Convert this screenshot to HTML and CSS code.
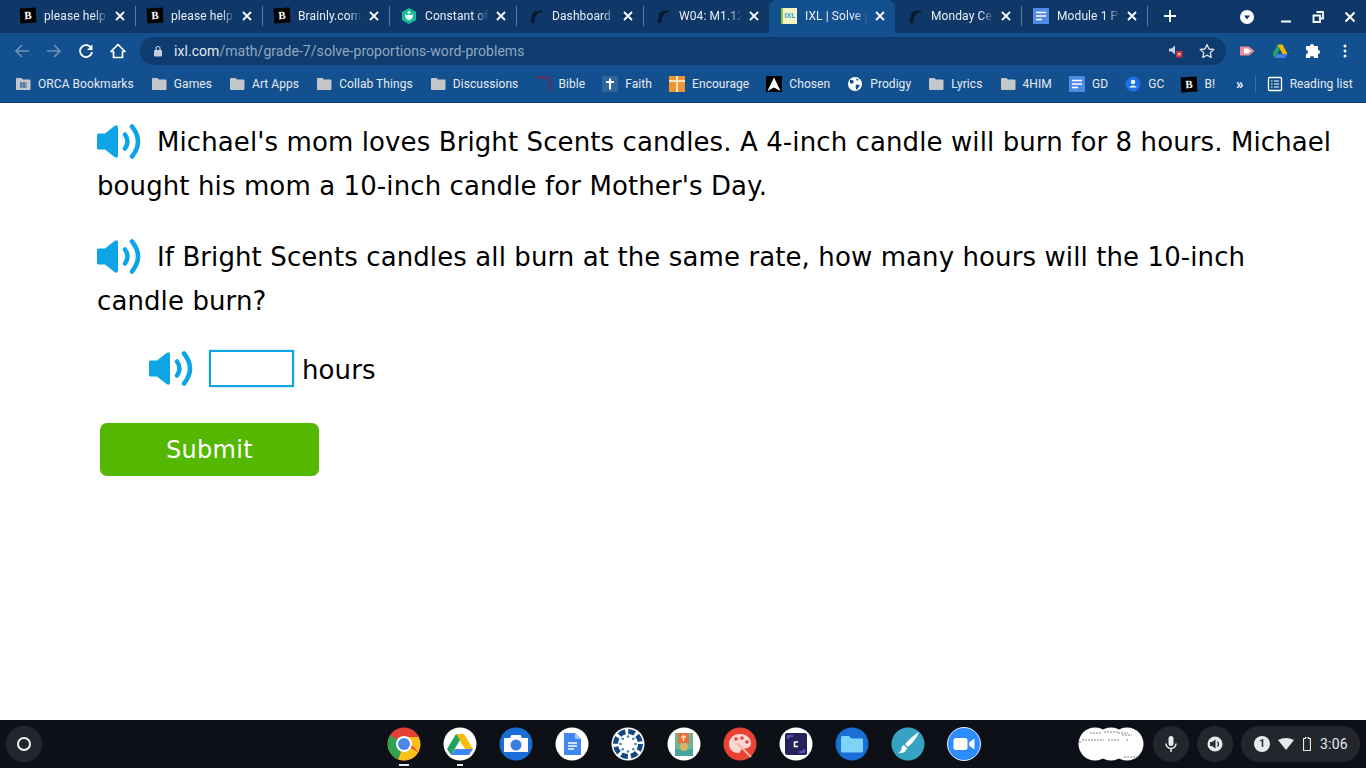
FILE: index.html
```html
<!DOCTYPE html>
<html lang="en">
<head>
<meta charset="utf-8">
<title>IXL | Solve proportions word problems</title>
<link rel="stylesheet" href="styles.css">
</head>
<body>
<svg class="defs" width="0" height="0" aria-hidden="true">
  <symbol id="close" viewBox="0 0 10 10"><path d="M1 1l8 8M9 1l-8 8" fill="none" stroke="currentColor" stroke-width="1.8"/></symbol>
  <symbol id="folder" viewBox="0 0 16 16"><path d="M1 3Q1 2 2 2H6.500L8 3.500H14.500Q15.500 3.500 15.500 4.500V13Q15.500 14 14.500 14H2Q1 14 1 13Z" fill="#c4c7c9"/></symbol>
  <symbol id="canvas" viewBox="0 0 16 16"><path d="M3 15Q3 8 5 4.500Q7 2 15 2.500L13 4.500Q9.500 4.500 8.500 7.500Q6.500 9 6 15Z" fill="#0a1a2e"/></symbol>
  <symbol id="doc" viewBox="0 0 16 16"><rect width="16" height="16" rx="1" fill="#4f8ae6"/><path d="M3 4.500h10M3 8h10M3 11.500h6" stroke="#fff" stroke-width="1.500"/></symbol>
  <symbol id="speaker" viewBox="0 0 44 35"><path d="M1.500 9.500H8L17.500 2Q21 0 21 3.500V31.500Q21 35 17.500 33L8 25.500H1.500Q0 25.500 0 24V11Q0 9.500 1.500 9.500Z" fill="#0ea5e6"/><path d="M28 10.500Q33 17.500 28 24.500M35 2.500Q47 17.500 35 32.500" fill="none" stroke="#0ea5e6" stroke-width="4.500" stroke-linecap="round"/></symbol>
</svg>
<div class="screen">
  <header class="tabstrip">
    <div class="tab tab-wide"><span class="fav-b">B</span><span class="tab-title">please help</span><svg class="tab-x"><use href="#close"/></svg></div>
    <div class="tab tab-wide"><span class="fav-b">B</span><span class="tab-title">please help</span><svg class="tab-x"><use href="#close"/></svg></div>
    <div class="tab tab-wide"><span class="fav-b">B</span><span class="tab-title">Brainly.com</span><svg class="tab-x"><use href="#close"/></svg></div>
    <div class="tab tab-wide"><svg class="fav" viewBox="0 0 16 16"><path d="M8 0L15 4V12L8 16L1 12V4Z" fill="#14bf96"/><path d="M4 6.500Q8 7.500 12 6.500Q12 11 8 12.500Q4 11 4 6.500Z" fill="#fff"/><circle cx="8" cy="4.500" r="1.500" fill="#fff"/></svg><span class="tab-title">Constant of</span><svg class="tab-x"><use href="#close"/></svg></div>
    <div class="tab tab-wide"><svg class="fav"><use href="#canvas"/></svg><span class="tab-title">Dashboard</span><svg class="tab-x"><use href="#close"/></svg></div>
    <div class="tab tab-before-active"><svg class="fav"><use href="#canvas"/></svg><span class="tab-title">W04: M1.12</span><svg class="tab-x"><use href="#close"/></svg></div>
    <div class="tab active"><span class="fav-ixl">IXL</span><span class="tab-title">IXL | Solve p</span><svg class="tab-x"><use href="#close"/></svg></div>
    <div class="tab"><svg class="fav"><use href="#canvas"/></svg><span class="tab-title">Monday Ce</span><svg class="tab-x"><use href="#close"/></svg></div>
    <div class="tab"><svg class="fav"><use href="#doc"/></svg><span class="tab-title">Module 1 P</span><svg class="tab-x"><use href="#close"/></svg></div>
    <svg class="newtab" viewBox="0 0 12 12"><path d="M6 0v12M0 6h12" stroke="#fff" stroke-width="1.800"/></svg>
    <div class="winctl">
      <span class="tabsearch"><svg viewBox="0 0 14 14"><circle cx="7" cy="7" r="7" fill="#fff"/><path d="M4 5.500h6L7 9.500Z" fill="#123a6b"/></svg></span>
      <svg class="wc" viewBox="0 0 12 12"><path d="M1 10.500h10" stroke="#fff" stroke-width="2"/></svg>
      <svg class="wc" viewBox="0 0 12 12"><path d="M4.500 1h6.500v6.500H9M1.500 4.500H8V11H1.500Z" fill="none" stroke="#fff" stroke-width="1.800"/></svg>
      <svg class="wc wc-last" viewBox="0 0 12 12"><path d="M1.500 1.500l9 9M10.500 1.500l-9 9" stroke="#fff" stroke-width="2"/></svg>
    </div>
  </header>

  <nav class="toolbar">
    <svg class="tb tb-dim" viewBox="0 0 16 16"><path d="M15 8H2M8 2L2 8l6 6" fill="none" stroke="currentColor" stroke-width="1.600"/></svg>
    <svg class="tb tb-dim" viewBox="0 0 16 16"><path d="M1 8h13M8 2l6 6-6 6" fill="none" stroke="currentColor" stroke-width="1.600"/></svg>
    <svg class="tb" viewBox="0 0 16 16"><path d="M13.500 5.500A6 6 0 1 0 14 9" fill="none" stroke="#fff" stroke-width="1.800"/><path d="M14.500 1.500V7H9Z" fill="#fff"/></svg>
    <svg class="tb" viewBox="0 0 16 16"><path d="M8 1.500L1 8.500H3.500V14.500H12.500V8.500H15Z" fill="none" stroke="#fff" stroke-width="1.700" stroke-linejoin="round"/></svg>
    <div class="omnibox">
      <svg class="lock" viewBox="0 0 10 12"><path d="M3 5V3.500a2 2 0 0 1 4 0V5" fill="none" stroke="#c5cfdb" stroke-width="1.200"/><rect x="1" y="5" width="8" height="6.500" rx="1" fill="#c5cfdb"/></svg>
      <span class="url"><span class="url-host">ixl.com</span>/math/grade-7/solve-proportions-word-problems</span>
      <svg class="muted" viewBox="0 0 14 14"><path d="M0 4.500H2.500L6 1.500V10.500L2.500 7.500H0Z" fill="#c9d3dd"/><rect x="7" y="7" width="6.500" height="6.500" fill="#c8333f"/><path d="M9 9l2.500 2.500M11.500 9L9 11.500" stroke="#fff"/></svg>
      <svg class="star" viewBox="0 0 16 16"><path d="M8 1.500l2 4.500 4.800.5-3.600 3.200 1 4.800L8 12.100 3.800 14.500l1-4.800L1.200 6.500 6 6Z" fill="none" stroke="#d7dee6" stroke-width="1.300" stroke-linejoin="round"/></svg>
    </div>
    <div class="extensions">
      <svg class="ext" viewBox="0 0 16 16"><path d="M1 3.500H10L15.500 8L10 12.500H1Z" fill="#f08a92"/><path d="M5 5.500H9L12 8L9 10.500H5Z" fill="#fff"/></svg>
      <svg class="ext" viewBox="0 0 16 16"><path d="M5.500 1.500h5L15.500 11H10.500Z" fill="#f5b800"/><path d="M5.500 1.500L.5 11l2.500 4 5-9Z" fill="#21a464"/><path d="M3 15h10l2.500-4H5.500Z" fill="#3f7fe8"/></svg>
      <svg class="ext" viewBox="0 0 16 16"><path d="M6 3a2 2 0 0 1 4 0h4v4a2 2 0 0 1 0 4v4H10a2 2 0 0 0-4 0H2v-4a2 2 0 0 0 0-4V3Z" fill="#fff"/></svg>
      <svg class="ext" viewBox="0 0 16 16"><circle cx="8" cy="3" r="1.500" fill="#fff"/><circle cx="8" cy="8" r="1.500" fill="#fff"/><circle cx="8" cy="13" r="1.500" fill="#fff"/></svg>
    </div>
  </nav>

  <nav class="bookmarks">
    <span class="bm"><svg class="bm-i" viewBox="0 0 16 16"><path d="M1 3Q1 2 2 2H6.500L8 3.500H14.500Q15.500 3.500 15.500 4.500V13Q15.500 14 14.500 14H2Q1 14 1 13Z" fill="#c4c7c9"/><path d="M5 7h7M5 9h7M5 11h7M6 6.500v5M9 6.500v5" stroke="#13508f" stroke-width=".8"/></svg>ORCA Bookmarks</span>
    <span class="bm"><svg class="bm-i"><use href="#folder"/></svg>Games</span>
    <span class="bm"><svg class="bm-i"><use href="#folder"/></svg>Art Apps</span>
    <span class="bm"><svg class="bm-i"><use href="#folder"/></svg>Collab Things</span>
    <span class="bm"><svg class="bm-i"><use href="#folder"/></svg>Discussions</span>
    <span class="bm"><svg class="bm-i" viewBox="0 0 16 16"><path d="M1 1.500H11Q15 1.500 15 6V15" fill="none" stroke="#6b2a4e" stroke-width="1.800"/></svg>Bible</span>
    <span class="bm"><svg class="bm-i" viewBox="0 0 16 16"><rect width="16" height="16" fill="#2f6699"/><path d="M8 2.500v11M4 6h8" stroke="#fff" stroke-width="2"/></svg>Faith</span>
    <span class="bm"><svg class="bm-i" viewBox="0 0 16 16"><rect width="16" height="16" fill="#f09536"/><path d="M8 0v16M0 5h16" stroke="#fbe3c5" stroke-width="2"/></svg>Encourage</span>
    <span class="bm"><svg class="bm-i" viewBox="0 0 16 16"><rect width="16" height="16" fill="#000"/><path d="M8 1.500L14.500 15L8 11.500L1.500 15Z" fill="#fff"/></svg>Chosen</span>
    <span class="bm"><svg class="bm-i" viewBox="0 0 16 16"><circle cx="8" cy="8" r="7" fill="#fff"/><path d="M3 4Q6 3 7 6Q5 9 3 7ZM9 8.500L13 9L10 14Q8 12 9 8.500ZM9 2.500L12 3.500L10 5Z" fill="#13508f"/></svg>Prodigy</span>
    <span class="bm"><svg class="bm-i"><use href="#folder"/></svg>Lyrics</span>
    <span class="bm"><svg class="bm-i"><use href="#folder"/></svg>4HIM</span>
    <span class="bm"><svg class="bm-i"><use href="#doc"/></svg>GD</span>
    <span class="bm"><svg class="bm-i" viewBox="0 0 16 16"><circle cx="8" cy="8" r="7.500" fill="#1a73e8"/><circle cx="8" cy="6" r="2.200" fill="#fff"/><path d="M4 11.500Q8 7.500 12 11.500Z" fill="#fff"/></svg>GC</span>
    <span class="bm bm-last"><span class="fav-b">B</span>B!</span>
    <span class="chev">»</span>
    <span class="reading"><svg class="bm-i" viewBox="0 0 16 16"><rect x="1.500" y="1.500" width="13" height="13" rx="1" fill="none" stroke="#fff" stroke-width="1.300"/><path d="M4 5h1.500M7 5h5M4 8h1.500M7 8h5M4 11h1.500M7 11h5" stroke="#fff" stroke-width="1.200"/></svg>Reading list</span>
  </nav>

  <main class="page">
    <p class="question"><svg class="audio"><use href="#speaker"/></svg>Michael's mom loves Bright Scents candles. A 4-inch candle will burn for 8 hours. Michael bought his mom a 10-inch candle for Mother's Day.</p>
    <p class="question"><svg class="audio"><use href="#speaker"/></svg>If Bright Scents candles all burn at the same rate, how many hours will the 10-inch candle burn?</p>
    <div class="answer">
      <svg class="audio"><use href="#speaker"/></svg>
      <input class="answer-input" type="text" aria-label="hours">
      <span class="unit">hours</span>
    </div>
    <button class="submit" type="button">Submit</button>
  </main>

  <footer class="shelf">
    <button class="launcher" type="button" aria-label="Launcher"><span class="launcher-ring"></span></button>
    <div class="apps">
      <span class="app running"><svg viewBox="0 0 34 34"><circle cx="17" cy="17" r="16.500" fill="#e53f35"/><path d="M17 17L31.300 25.200A16.500 16.500 0 0 1 11 32.400Z" fill="#f9c21a"/><path d="M17 17L11 32.400A16.500 16.500 0 0 1 3.300 8Z" fill="#2fa44f"/><path d="M17 10H31.500A16.500 16.500 0 0 1 31.300 25.200Z" fill="#f9c21a"/><circle cx="17" cy="17" r="8" fill="#fff"/><circle cx="17" cy="17" r="6" fill="#4b86e8"/></svg></span>
      <span class="app running short"><svg viewBox="0 0 34 34"><circle cx="17" cy="17" r="16.500" fill="#fff"/><path d="M13 7h8l9 15h-8Z" fill="#fbbc04"/><path d="M13 7L4 22l4 6 9-15Z" fill="#1ea362"/><path d="M8 28H26L30 22H12Z" fill="#4285f4"/></svg></span>
      <span class="app"><svg viewBox="0 0 34 34"><circle cx="17" cy="17" r="16.500" fill="#1a6fd6"/><path d="M5 11H11L12.500 8H21.500L23 11H29V25H5Z" fill="#fff"/><circle cx="17" cy="18" r="5.500" fill="#3b7de0"/></svg></span>
      <span class="app"><svg viewBox="0 0 34 34"><circle cx="17" cy="17" r="16.500" fill="#fff"/><path d="M9 6H20L26 12V28H9Z" fill="#4285f4"/><path d="M20 6L26 12H20Z" fill="#a5c4f8"/><path d="M13 16h9M13 19h9M13 22h6" stroke="#fff" stroke-width="1.400"/></svg></span>
      <span class="app"><svg viewBox="0 0 34 34"><circle cx="17" cy="17" r="16.500" fill="#fff"/><circle cx="17" cy="17" r="12.500" fill="none" stroke="#12487e" stroke-width="5" stroke-dasharray="6.800 3"/><g fill="#3f8f9f"><circle cx="17" cy="9.500" r="1.300"/><circle cx="17" cy="24.500" r="1.300"/><circle cx="9.500" cy="17" r="1.300"/><circle cx="24.500" cy="17" r="1.300"/><circle cx="11.700" cy="11.700" r="1.300"/><circle cx="22.300" cy="11.700" r="1.300"/><circle cx="11.700" cy="22.300" r="1.300"/><circle cx="22.300" cy="22.300" r="1.300"/></g></svg></span>
      <span class="app"><svg viewBox="0 0 34 34"><circle cx="17" cy="17" r="16.500" fill="#fff"/><rect x="8" y="6" width="18" height="23" fill="#6fb58f"/><rect x="11" y="6" width="11" height="10" fill="#e8703f"/><path d="M16.500 8v6M14 10h5" stroke="#fbe3c5" stroke-width="1.500"/><rect x="8" y="22" width="18" height="7" fill="#47a7a0"/><circle cx="17" cy="20" r="4" fill="#d9b25f"/></svg></span>
      <span class="app"><svg viewBox="0 0 34 34"><circle cx="17" cy="17" r="16.500" fill="#ea4335"/><path d="M17 7C10 7 6 12 6 17C6 23 11 26 15 26C18 26 17 23 19 22C22 21 28 22 28 16C28 11 23 7 17 7Z" fill="#fbd7d4"/><path d="M14 16L28 30" stroke="#f4b5af" stroke-width="2"/><circle cx="13" cy="12" r="1.800" fill="#ea4335"/><circle cx="19" cy="11" r="1.800" fill="#ea4335"/><circle cx="24" cy="15" r="1.800" fill="#ea4335"/></svg></span>
      <span class="app"><svg viewBox="0 0 34 34"><circle cx="17" cy="17" r="16.500" fill="#fff"/><rect x="6" y="6" width="22" height="22" rx="2" fill="#24235c"/><path d="M9 12V9H14M25 22V25H20" fill="none" stroke="#6d62d8" stroke-width="1.400"/><path d="M19 15H15.500V19.500H19" fill="none" stroke="#fff" stroke-width="1.500"/></svg></span>
      <span class="app"><svg viewBox="0 0 34 34"><circle cx="17" cy="17" r="16.500" fill="#1a6fd6"/><path d="M6 10.500Q6 9 7.500 9H14L16.500 11.500H27Q28 11.500 28 12.500V24Q28 25.500 26.500 25.500H7.500Q6 25.500 6 24Z" fill="#7fd3f7"/></svg></span>
      <span class="app"><svg viewBox="0 0 34 34"><circle cx="17" cy="17" r="16.500" fill="#37a3c4"/><path d="M28 5Q25 13 17 20L14 17Q21 9 28 5Z" fill="#fff"/><path d="M13 18L16 21Q15 27 7 26Q11 24 10.500 21Q11 18.500 13 18Z" fill="#fff"/></svg></span>
      <span class="app"><svg viewBox="0 0 34 34"><circle cx="17" cy="17" r="16.500" fill="#2d8cff" stroke="#dfeeff"/><rect x="6.500" y="11" width="14" height="12" rx="2.500" fill="#fff"/><path d="M22 15.500L27.500 11.500V22.500L22 18.500Z" fill="#fff"/></svg></span>
    </div>
    <div class="tray">
      <svg class="holding" viewBox="0 0 66 34"><g fill="#fff"><circle cx="17" cy="17" r="16.500"/><circle cx="33" cy="17" r="16.500"/><circle cx="49" cy="17" r="16.500"/></g><path d="M12 6h12M26 5h14M40 6h10M44 8h10M4 13h22M30 13h12M48 13h2M1 15h3M46 30h14" stroke="#7c8794" stroke-width="1" stroke-dasharray="2 1"/></svg>
      <span class="tray-btn"><svg viewBox="0 0 16 18"><rect x="5.500" y="1" width="5" height="10" rx="2.500" fill="#e8eaed"/><path d="M3 8.500a5 5 0 0 0 10 0M8 13.500V17" fill="none" stroke="#e8eaed" stroke-width="1.500"/></svg></span>
      <span class="tray-btn tray-audio"><svg viewBox="0 0 16 16"><circle cx="8" cy="8" r="7.500" fill="#e8eaed"/><path d="M3 6H5L8.500 3.500V12.500L5 10H3Z" fill="#2a2e33"/><path d="M10.500 5.500a4 4 0 0 1 0 5" fill="none" stroke="#2a2e33" stroke-width="1.200"/></svg></span>
      <div class="status">
        <span class="badge">1</span>
        <svg class="wifi" viewBox="0 0 16 12"><path d="M0 2Q8-2 16 2L8 12Z" fill="#e8eaed"/></svg>
        <svg class="battery" viewBox="0 0 8 14"><path d="M2.500 0H5.500V1.500H7.500V13.500H.5V1.500H2.500Z" fill="none" stroke="#e8eaed" stroke-width="1.200"/></svg>
        <span class="clock">3:06</span>
      </div>
    </div>
  </footer>
</div>
</body>
</html>
```

FILE: styles.css
```css
* { box-sizing: border-box; }
html, body { margin: 0; padding: 0; height: 100%; overflow: hidden; background: #fff; }
.defs { position: absolute; }
.screen { width: 1366px; height: 768px; display: flex; flex-direction: column; font-family: Roboto, "Liberation Sans", sans-serif; }

/* tab strip */
.tabstrip { height: 33px; flex: none; display: flex; align-items: stretch; padding-left: 8px; background: #0f3868; color: #e8eef5; }
.tab { width: 126px; flex: none; display: flex; align-items: center; padding: 0 10px 2px 12px; position: relative; font-size: 12px; }
.tab-wide { width: 127px; }
.tab::after { content: ""; position: absolute; right: -1px; top: 6px; bottom: 7px; width: 1px; background: #5d7c9e; }
.tab-before-active::after, .tab.active::after { display: none; }
.tab.active { background: #13508f; border-radius: 8px 8px 0 0; }
.fav { width: 16px; height: 16px; flex: none; }
.fav-b { width: 16px; height: 15px; flex: none; background: #000; color: #fff; font: bold 11px/15px "Liberation Serif", serif; text-align: center; transform: rotate(-3deg); }
.fav-ixl { width: 16px; height: 16px; flex: none; background: #f4f4c8; border-left: 2px solid #8cc63f; color: #2a9fd6; font: bold 7px/16px "Liberation Sans", sans-serif; text-align: center; overflow: hidden; }
.tab-title { flex: 1; margin-left: 8px; white-space: nowrap; overflow: hidden; letter-spacing: .1px; -webkit-mask-image: linear-gradient(90deg, #000 78%, transparent 98%); mask-image: linear-gradient(90deg, #000 78%, transparent 98%); }
.tab-x { width: 10px; height: 10px; flex: none; margin-left: 6px; color: #fff; }
.newtab { width: 12px; height: 12px; flex: none; align-self: center; margin: 0 0 2px 17px; }
.winctl { margin-left: auto; display: flex; align-items: center; }
.tabsearch { display: flex; margin-right: 26px; }
.tabsearch svg { width: 14px; height: 14px; }
.wc { width: 12px; height: 12px; margin-right: 20px; }
.wc-last { margin-right: 10px; }

/* toolbar */
.toolbar { height: 34px; flex: none; display: flex; align-items: center; background: #13508f; padding: 2px 0 0 14px; }
.tb { width: 16px; height: 16px; margin-right: 16px; flex: none; color: #fff; }
.tb-dim { color: #6c93bb; }
.omnibox { width: 1086px; height: 28px; margin-left: -2px; flex: none; background: #0f3c6f; border-radius: 14px; display: flex; align-items: center; padding: 0 11px 0 13px; font-size: 14px; color: #8fa8c2; }
.lock { width: 10px; height: 12px; flex: none; }
.url { margin-left: 11px; flex: 1; white-space: nowrap; letter-spacing: .05px; }
.url-host { color: #e3e9ef; }
.muted { width: 14px; height: 14px; margin-right: 16px; }
.star { width: 16px; height: 16px; }
.extensions { display: flex; align-items: center; gap: 16.500px; margin-left: 13px; }
.ext { width: 16px; height: 16px; flex: none; }

/* bookmarks */
.bookmarks { height: 36px; flex: none; display: flex; align-items: center; background: #13508f; border-bottom: 1px solid #0f3c6f; padding: 0 0 1px 15px; font-size: 12px; letter-spacing: .06px; color: #e6ecf2; }
.bm { display: flex; align-items: center; gap: 7px; margin-right: 17.100px; white-space: nowrap; }
.bm-i { width: 16px; height: 16px; flex: none; }
.bm-last { margin-right: 0; }
.chev { margin-left: 21px; font-size: 15px; line-height: 1; color: #fff; font-weight: bold; }
.reading { display: flex; align-items: center; gap: 7px; margin-left: 11px; padding-left: 11px; border-left: 1px solid #3d6fa3; height: 18px; }

/* page */
.page { flex: 1; min-height: 0; padding: 18px 32px 0 97px; color: #000; font-family: "DejaVu Sans", Verdana, sans-serif; font-size: 26px; letter-spacing: .1px; }
.question { margin: 0 0 28px; line-height: 43.500px; }
.audio { width: 44px; height: 35px; vertical-align: -8px; margin-right: 16px; }
.answer { display: flex; align-items: center; margin: -2px 0 36px 52px; height: 38px; }
.answer .audio { flex: none; }
.answer-input { width: 85px; height: 37px; border: 2px solid #0ea5e6; padding: 0; background: #fff; outline: none; box-shadow: 0 0 2px #8fd6f5; flex: none; }
.unit { margin-left: 8px; padding-top: 4px; }
.submit { display: block; width: 219px; height: 53px; margin-left: 3px; background: #54b700; color: #fff; border: 0; border-radius: 7px; font: 24px "DejaVu Sans", Verdana, sans-serif; letter-spacing: .3px; padding: 0; }

/* shelf */
.shelf { height: 48px; flex: none; background: #0d1117; display: flex; align-items: center; padding-left: 6px; }
.launcher { width: 36px; height: 36px; border-radius: 50%; background: #23272d; border: 0; padding: 0; display: flex; align-items: center; justify-content: center; }
.launcher-ring { width: 14px; height: 14px; border: 2px solid #f1f3f4; border-radius: 50%; }
.apps { display: flex; gap: 22px; margin-left: 345px; }
.app { width: 34px; height: 34px; position: relative; flex: none; }
.app svg { width: 34px; height: 34px; display: block; }
.app.running::after { content: ""; position: absolute; left: 12px; bottom: -5px; width: 10px; height: 2px; background: #e8eaed; }
.app.short::after { left: 14px; width: 6px; }
.tray { margin-left: auto; display: flex; align-items: center; padding-right: 6px; }
.holding { width: 66px; height: 34px; margin-right: 9px; flex: none; }
.tray-btn { width: 36px; height: 36px; border-radius: 50%; background: #23272d; display: flex; align-items: center; justify-content: center; margin-right: 8px; }
.tray-btn svg { width: 16px; height: 18px; }
.tray-audio svg { height: 16px; }
.status { width: 119px; height: 36px; border-radius: 18px; background: #23272d; display: flex; align-items: center; padding-left: 13px; color: #e8eaed; font-size: 14px; }
.badge { width: 16px; height: 16px; border-radius: 50%; background: #e8eaed; color: #23272d; font-size: 10px; font-weight: bold; line-height: 16px; text-align: center; }
.wifi { width: 16px; height: 12px; margin-left: 8px; }
.battery { width: 8px; height: 14px; margin-left: 9px; }
.clock { margin-left: 9px; letter-spacing: .2px; }
```
